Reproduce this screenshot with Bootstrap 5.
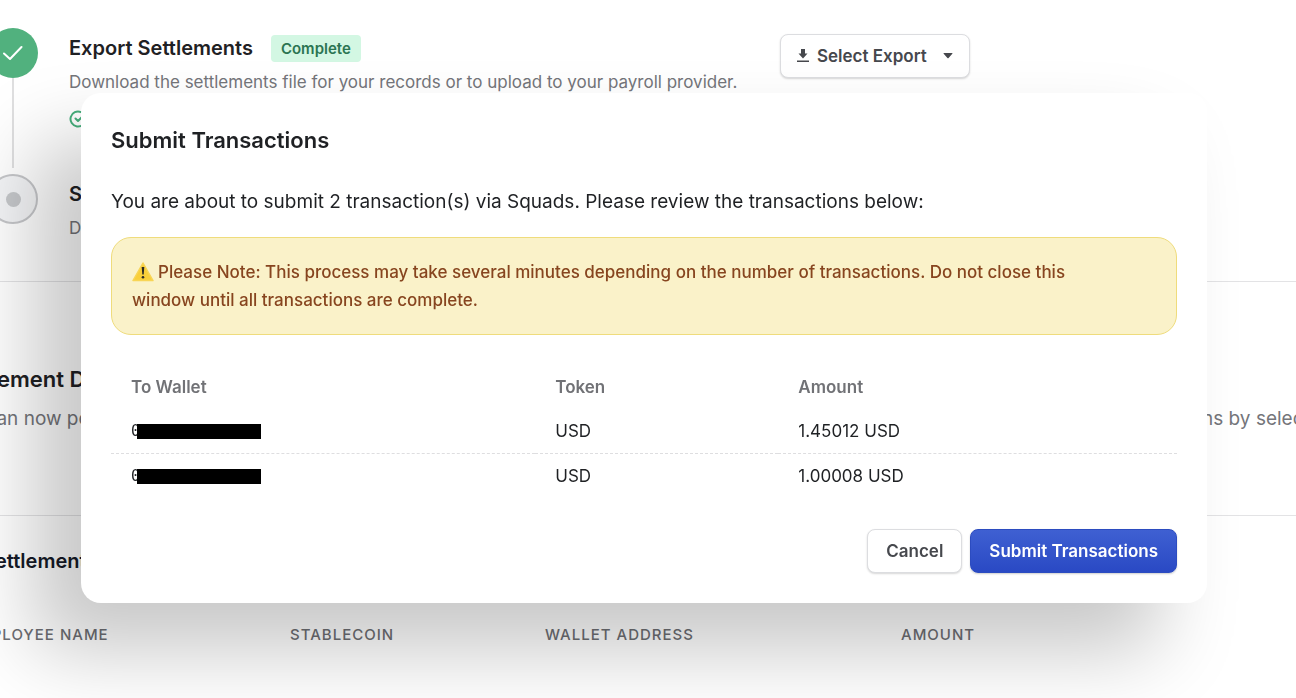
<!DOCTYPE html>
<html lang="en">
<head>
<meta charset="utf-8">
<meta name="viewport" content="width=device-width, initial-scale=1">
<title>Submit Transactions</title>
<link href="https://cdn.jsdelivr.net/npm/bootstrap@5.3.0/dist/css/bootstrap.min.css" rel="stylesheet">
<style>
  body { font-family: Inter, "Liberation Sans", sans-serif; font-size: 18px; line-height: 28px; color: #1f2124; background: #fff; overflow: hidden; }
  h1, h2, h3, p { margin: 0; }

  /* Settlement steps */
  .step { display: grid; grid-template-columns: 52px 1fr; column-gap: 30px; margin-left: -13px; }
  .step + .step { margin-top: 6px; }
  .rail { display: flex; flex-direction: column; align-items: center; }
  .dot { width: 50px; height: 50px; border-radius: 50%; display: flex; align-items: center; justify-content: center; flex: none; }
  .dot-done { background: #51b17e; }
  .dot-next { background: #f4f5f7; border: 2px solid #c6c7ca; }
  .dot-next::after { content: ""; width: 15px; height: 15px; border-radius: 50%; background: #c6c8cb; }
  .rail-line { width: 2px; height: 90px; background: #dfdfe0; }
  .step-title { font-size: 20px; font-weight: 600; line-height: 28px; }
  .step-text { font-size: 17px; }
  .step-body { padding-top: 6px; }
  .step-head { margin-bottom: 6px; }
  .muted { color: #74757a; }
  .tag { background: #d3f7e3; color: #2b7552; font-size: 15px; font-weight: 600; line-height: 27px; padding: 0 10px; border-radius: 4px; margin-left: 18px; }
  .export-cell { width: 516px; padding-top: 6px; }

  .btn-lite, .btn-main { font-size: 17px; font-weight: 600; line-height: 26px; padding: 8px 18px; border-radius: 8px; }
  .btn-lite { --bs-btn-color: #46484d; --bs-btn-bg: #fff; --bs-btn-border-color: #dcdde0; --bs-btn-hover-bg: #f6f6f7; box-shadow: 0 1px 2px rgba(0,0,0,.16); }
  .btn-main { --bs-btn-color: #fff; --bs-btn-border-color: #2c4cc0; --bs-btn-hover-color: #fff; background: linear-gradient(#3f60d2, #2a49c4); box-shadow: 0 1px 2px rgba(0,0,0,.2); }
  .export-cell .btn-lite { padding: 8px 16px; }

  /* Page bands */
  .band { border-top: 1px solid #e3e3e5; white-space: nowrap; overflow: hidden; }
  .band-details { margin-top: 39px; padding: 81px 0; height: 234px; }
  .band-title { font-size: 22px; font-weight: 600; line-height: 32px; margin: 0 0 10px -51px; }
  .band-text { font-size: 19px; }
  .band-lead { margin-left: -54px; }
  .band-tail { width: 110px; }
  .band-list { padding: 31px 0; }
  .list-title { font-size: 20px; font-weight: 600; line-height: 28px; color: #151a28; margin: 0 0 48px -18px; }
  .list-head { width: 100%; table-layout: fixed; margin-left: -33px; }
  .list-head th { font-size: 15px; font-weight: 500; line-height: 24px; letter-spacing: 1px; color: #6d6e73; padding: 0; }
  .c-name { width: 323px; } .c-coin { width: 255px; } .c-addr { width: 356px; }

  /* Dialog */
  .shell { margin: 93px 89px 0 81px; max-width: none; }
  .sheet { border: 0; border-radius: 20px; padding: 30px; box-shadow: -48px 48px 80px rgba(0,0,0,.22); color: inherit; }
  .sheet-title { font-size: 22px; font-weight: 600; line-height: 34px; }
  .sheet-text { font-size: 19px; margin: 31px 0 21px; }
  .note { background: #faf2c9; border: 1px solid #efdc7c; border-radius: 20px; padding: 20px 60px 20px 20px; color: #87451f; font-weight: 500; font-size: 17px; }
  .pay { width: 100%; table-layout: fixed; font-size: 17px; margin: 30px 0 31px; }
  .pay th { color: #717276; font-weight: 600; padding: 8px 20px; }
  .pay td { padding: 8px 20px; height: 44px; }
  .pay tbody tr + tr td { border-top: 1px dashed #dedee0; }
  .p-to { width: 39.8%; } .p-token { width: 22.8%; }
  .addr { display: flex; align-items: center; font-family: "DejaVu Sans Mono", monospace; font-size: 15px; line-height: 26px; }
  .digit { width: 8px; }
  .redact { width: 124px; height: 15px; background: #000; margin-left: -2px; z-index: 1; }
</style>
</head>
<body>
<main>
  <section class="pt-4">
    <div class="step mt-1">
      <div class="rail">
        <div class="dot dot-done"><svg width="20" height="16" viewBox="0 0 20 16" fill="none" stroke="#fff" stroke-width="2" stroke-linecap="round" stroke-linejoin="round"><path d="M1 8.500l6 5.500L18.500 2"/></svg></div>
        <div class="rail-line"></div>
      </div>
      <div class="d-flex">
        <div class="flex-grow-1 step-body">
          <div class="d-flex align-items-center step-head">
            <h2 class="step-title">Export Settlements</h2>
            <span class="tag">Complete</span>
          </div>
          <p class="step-text muted mb-2">Download the settlements file for your records or to upload to your payroll provider.</p>
          <svg width="18" height="18" viewBox="0 0 18 18" fill="none" stroke="#45ae7b" stroke-width="2" stroke-linecap="round" stroke-linejoin="round"><path d="M16.500 8.300V9a7.500 7.500 0 1 1-4.500-6.900M16.500 3.500 9 11 6.500 8.500"/></svg>
        </div>
        <div class="export-cell">
          <button type="button" class="btn btn-lite d-inline-flex align-items-center">
            <svg width="12" height="14" viewBox="0 0 12 14" fill="#46484d" class="me-2"><path d="M4 0h4v4.500h2.500L6 9.500 1.500 4.500H4zM0 11.500h12V13H0z"/></svg>
            Select Export
            <svg width="10" height="6" viewBox="0 0 10 6" fill="#46484d" class="ms-3"><path d="M1 0h8q1 0 .300.800L5.600 5q-.600.700-1.200 0L.700.800Q0 0 1 0z"/></svg>
          </button>
        </div>
      </div>
    </div>
    <div class="step">
      <div class="rail"><div class="dot dot-next"></div></div>
      <div class="step-body">
        <h2 class="step-title step-head">Su</h2>
        <p class="step-text muted">Do</p>
      </div>
    </div>
  </section>
  <section class="band band-details">
    <h2 class="band-title">Settlement D</h2>
    <p class="band-text muted d-flex justify-content-between"><span class="band-lead">You can now pe</span><span class="band-tail">ions by selecting</span></p>
  </section>
  <section class="band band-list">
    <h3 class="list-title">Settlements</h3>
    <table class="list-head">
      <colgroup><col class="c-name"><col class="c-coin"><col class="c-addr"><col></colgroup>
      <thead><tr><th scope="col">EMPLOYEE NAME</th><th scope="col">STABLECOIN</th><th scope="col">WALLET ADDRESS</th><th scope="col">AMOUNT</th></tr></thead>
    </table>
  </section>
</main>
<div class="modal d-block" role="dialog" aria-modal="true" aria-labelledby="dlgTitle">
  <div class="modal-dialog shell">
    <div class="modal-content sheet">
      <h1 class="sheet-title" id="dlgTitle">Submit Transactions</h1>
      <p class="sheet-text">You are about to submit 2 transaction(s) via Squads. Please review the transactions below:</p>
      <div class="note"><svg width="22" height="20" viewBox="0 0 22 20" class="align-text-bottom me-1"><path d="M11 1 21 18.500H1z" fill="#f9cf3a" stroke="#f8d556" stroke-width="1.500" stroke-linejoin="round"/><path d="M9.700 5h2.600l-.600 7.500h-1.400z" fill="#2b2a26"/><circle cx="11" cy="15.300" r="1.300" fill="#2b2a26"/></svg>Please Note: This process may take several minutes depending on the number of transactions. Do not close this window until all transactions are complete.</div>
      <table class="pay">
        <colgroup><col class="p-to"><col class="p-token"><col></colgroup>
        <thead><tr><th scope="col">To Wallet</th><th scope="col">Token</th><th scope="col">Amount</th></tr></thead>
        <tbody>
          <tr><td><div class="addr"><span class="digit">0</span><span class="redact"></span></div></td><td>USD</td><td>1.45012 USD</td></tr>
          <tr><td><div class="addr"><span class="digit">0</span><span class="redact"></span></div></td><td>USD</td><td>1.00008 USD</td></tr>
        </tbody>
      </table>
      <div class="d-flex justify-content-end gap-2">
        <button type="button" class="btn btn-lite">Cancel</button>
        <button type="button" class="btn btn-main">Submit Transactions</button>
      </div>
    </div>
  </div>
</div>
<script src="https://cdn.jsdelivr.net/npm/bootstrap@5.3.0/dist/js/bootstrap.bundle.min.js"></script>
</body>
</html>
